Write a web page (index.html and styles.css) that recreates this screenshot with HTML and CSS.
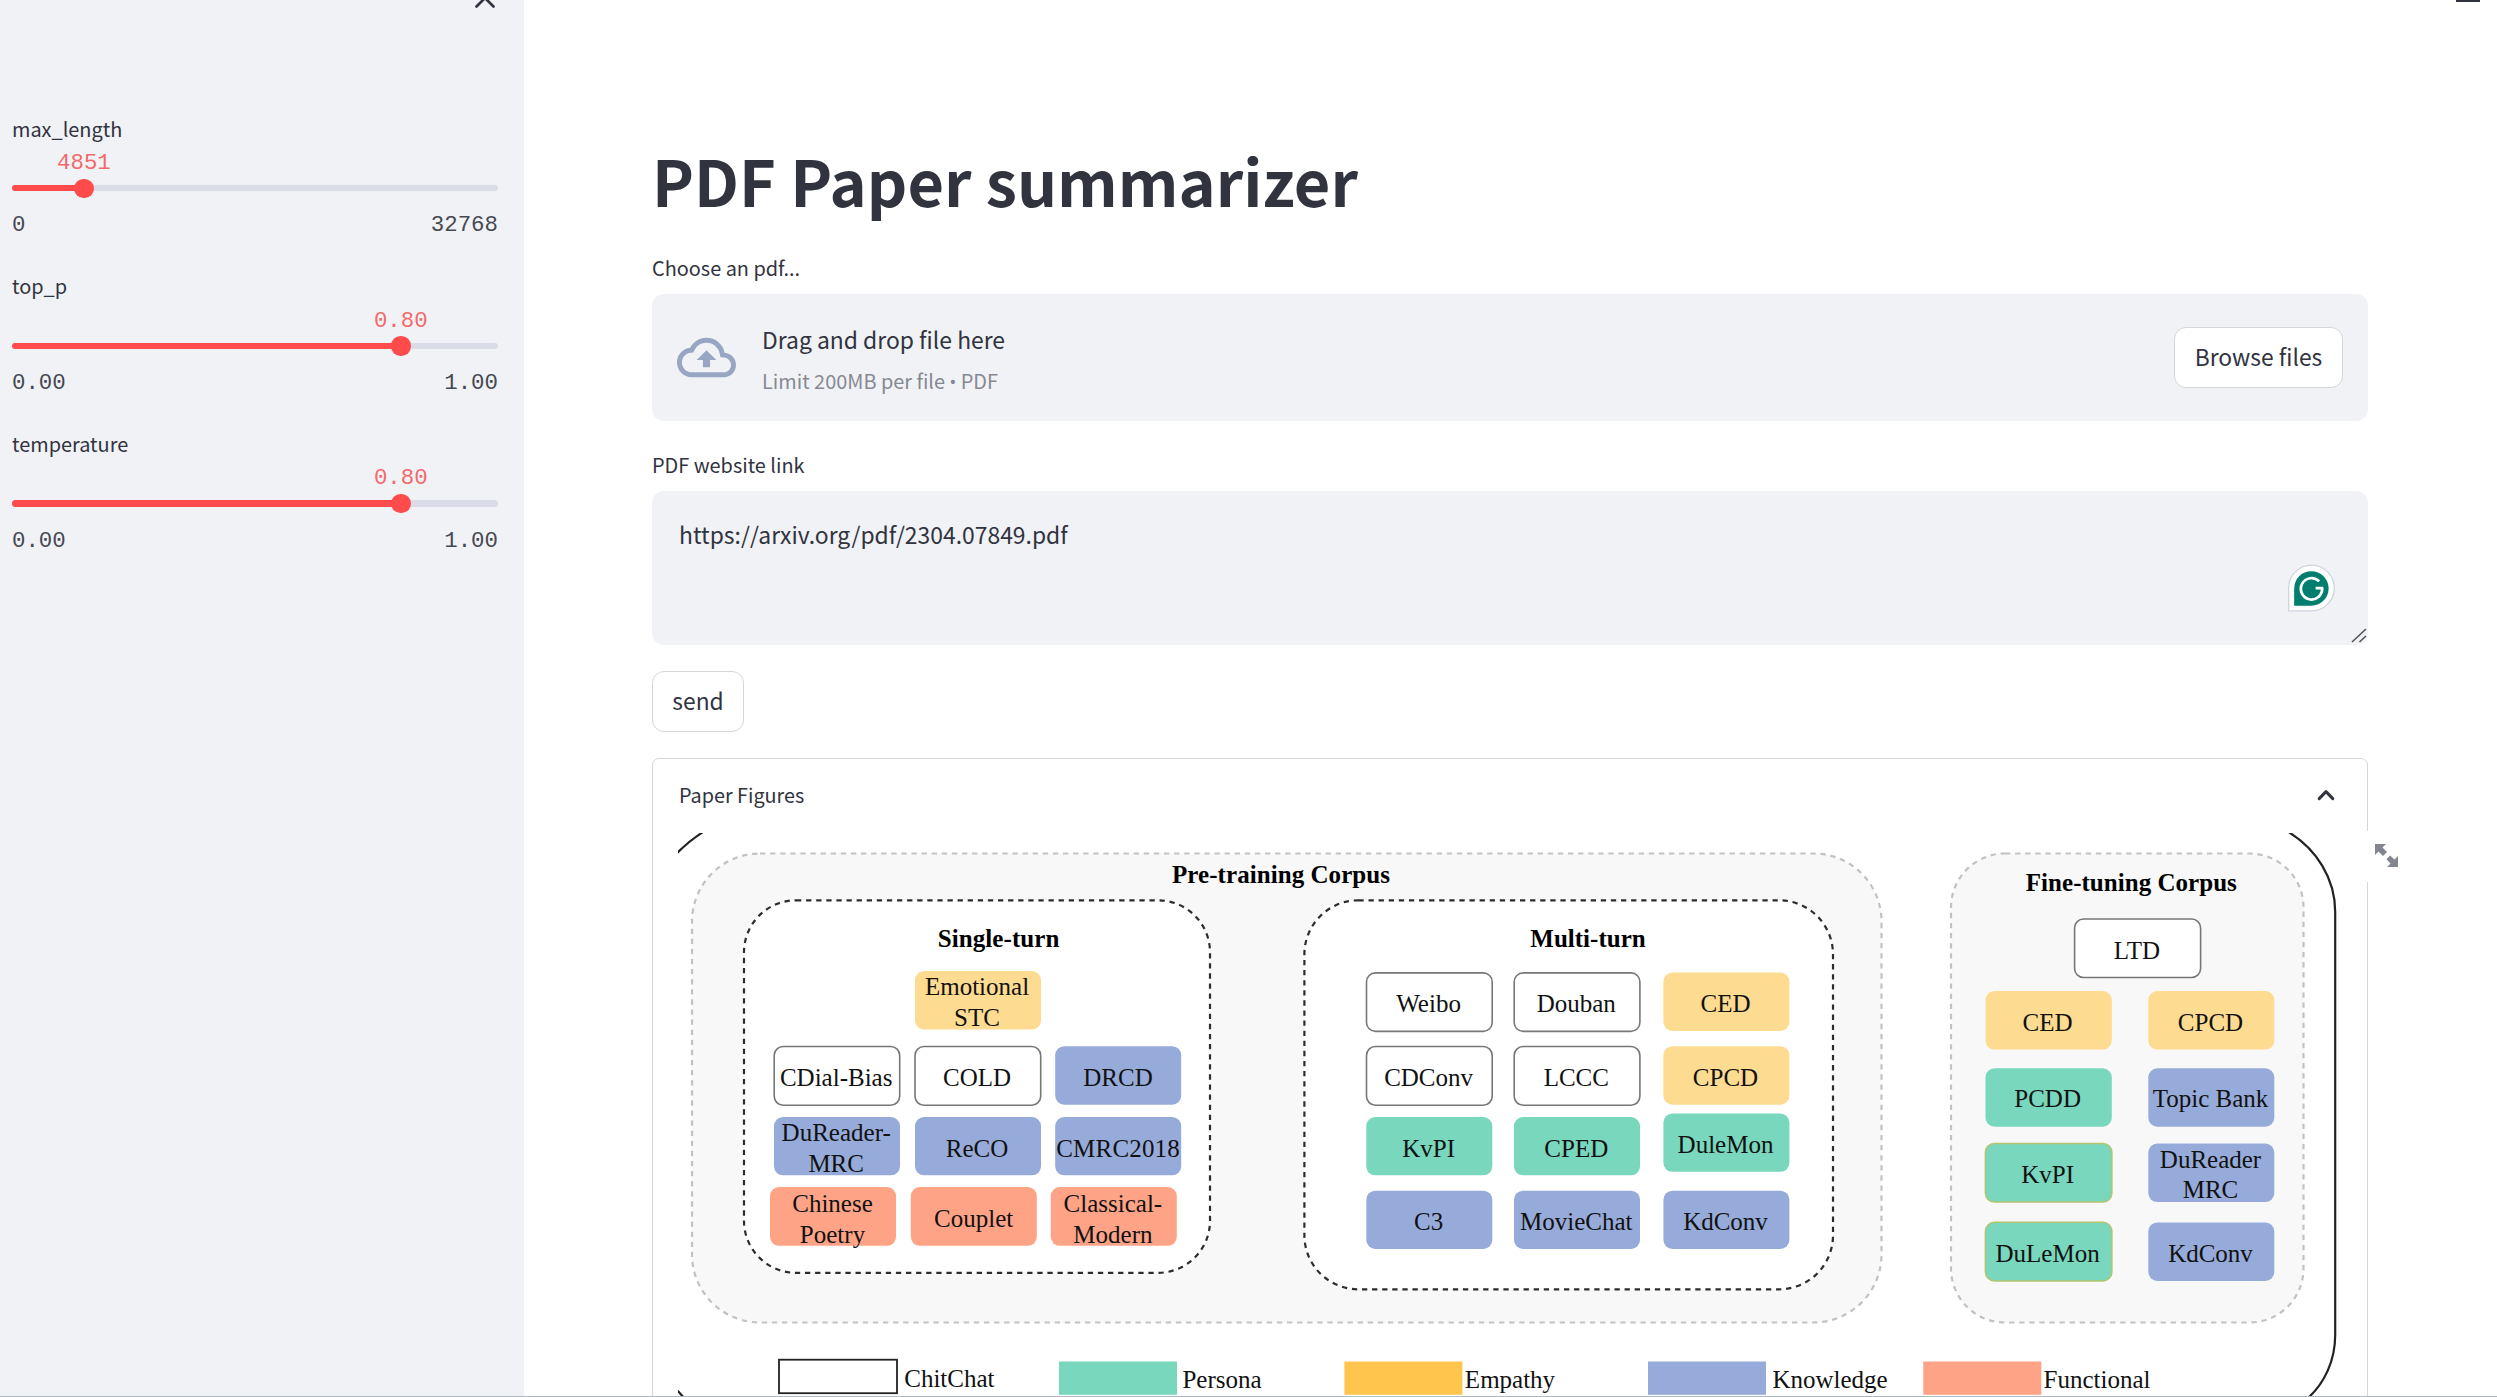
FILE: index.html
```html
<!DOCTYPE html>
<html lang="en">
<head>
<meta charset="utf-8">
<title>PDF Paper summarizer</title>
<link rel="stylesheet" href="styles.css">
</head>
<body>
<div class="app">
  <aside class="sidebar">
    <svg class="close" viewBox="0 0 22 22"><path d="M2.5 2.5 19.5 19.5M19.5 2.5 2.5 19.5"/></svg>
    <div class="slider">
      <label class="label">max_length</label>
      <div class="track"><div class="fill" style="width:14.8%"></div><div class="thumb" style="left:14.8%"><span class="value">4851</span></div></div>
      <div class="range"><span>0</span><span>32768</span></div>
    </div>
    <div class="slider">
      <label class="label">top_p</label>
      <div class="track"><div class="fill" style="width:80%"></div><div class="thumb" style="left:80%"><span class="value">0.80</span></div></div>
      <div class="range"><span>0.00</span><span>1.00</span></div>
    </div>
    <div class="slider">
      <label class="label">temperature</label>
      <div class="track"><div class="fill" style="width:80%"></div><div class="thumb" style="left:80%"><span class="value">0.80</span></div></div>
      <div class="range"><span>0.00</span><span>1.00</span></div>
    </div>
  </aside>
  <main class="main">
    <div class="menu"></div>
    <h1 class="title">PDF Paper summarizer</h1>
    <div class="label">Choose an pdf...</div>
    <section class="dropzone">
      <svg class="cloud" viewBox="0 0 24 24"><path d="M19.35 10.04A7.49 7.49 0 0 0 12 4C9.11 4 6.6 5.64 5.35 8.04A5.994 5.994 0 0 0 0 14c0 3.31 2.69 6 6 6h13c2.76 0 5-2.24 5-5 0-2.64-2.05-4.78-4.65-4.96zM19 18H6c-2.21 0-4-1.79-4-4 0-2.05 1.53-3.76 3.56-3.97l1.07-.11.5-.95A5.469 5.469 0 0 1 12 6c2.62 0 4.88 1.86 5.39 4.43l.3 1.5 1.53.11A2.98 2.98 0 0 1 22 15c0 1.65-1.35 3-3 3zM8 13h2.55v3h2.9v-3H16l-4-4z"/></svg>
      <div class="drop-text"><span class="drop-main">Drag and drop file here</span><span class="drop-sub">Limit 200MB per file <span class="bullet">•</span> PDF</span></div>
      <button class="btn browse">Browse files</button>
    </section>
    <div class="label">PDF website link</div>
    <div class="textarea">
      <span>https://arxiv.org/pdf/2304.07849.pdf</span>
      <svg class="grammarly" viewBox="0 0 48 48"><path class="g-shell" d="M.7 47.3V24A23.3 23.3 0 1 1 24 47.3z"/><path class="g-body" d="M6.3 42V24.5A17.6 17.6 0 1 1 24 42z"/><path class="g-mark" d="M31.8 17.2A10.9 10.9 0 1 0 34.9 24.2M36 24.2H28.2"/></svg>
      <svg class="resize" viewBox="0 0 16 15"><path d="M1 14 15 1M8.5 14 15 8"/></svg>
    </div>
    <button class="btn send">send</button>
    <section class="expander">
      <header class="expander-head"><span>Paper Figures</span><svg class="chevron" viewBox="0 0 18 12"><path d="M2.2 9.6 9 2.6 15.8 9.6"/></svg></header>
      <div class="fullscreen"><svg viewBox="0 0 23 23"><path d="M0 0H11L7.5 3.5 12 8 8 12 3.5 7.5 0 11ZM23 23H12L15.5 19.5 11.5 15.3 15 11.5 19.5 15.5 23 12Z"/></svg></div>
      <svg class="figure" viewBox="678 833 1674 564">
        <g class="frame"><path d="M670 861Q683 845 703 832"/><path d="M2287 831C2317 849 2335.2 879 2335.2 912V1335C2335.2 1360 2325 1383 2307 1399"/><path d="M676 1389 686 1400"/></g>
        <rect class="corpus" x="692" y="853.5" width="1189.5" height="469" rx="68"/>
        <rect class="corpus" x="1951" y="853.5" width="352.5" height="469" rx="54"/>
        <rect class="turn" x="744" y="900.3" width="466" height="372.5" rx="52"/>
        <rect class="turn" x="1304.4" y="900.3" width="528.6" height="389" rx="54"/>
        <g class="heading">
          <text x="1281" y="883.4" textLength="218">Pre-training Corpus</text>
          <text x="998.6" y="947" textLength="121.5">Single-turn</text>
          <text x="1588" y="947" textLength="115.5">Multi-turn</text>
          <text x="2131.3" y="891.3" textLength="211">Fine-tuning Corpus</text>
        </g>
        <g class="empathy">
          <rect x="915" y="971" width="126" height="58.5" rx="9"/>
          <rect x="1663.4" y="972.5" width="126" height="58.5" rx="9"/><rect x="1663.4" y="1046.2" width="126" height="58.5" rx="9"/>
          <rect x="1985.5" y="991" width="126.3" height="58.6" rx="9"/><rect x="2148.3" y="991" width="126" height="58.6" rx="9"/>
        </g>
        <g class="chitchat">
          <rect x="774.2" y="1046.5" width="125.5" height="58.7" rx="9"/><rect x="915" y="1046.5" width="125.7" height="58.7" rx="9"/>
          <rect x="1366.5" y="972.9" width="125.7" height="58.5" rx="9"/><rect x="1514.2" y="972.9" width="125.7" height="58.5" rx="9"/>
          <rect x="1366.5" y="1046.5" width="125.7" height="58.7" rx="9"/><rect x="1514.2" y="1046.5" width="125.7" height="58.7" rx="9"/>
          <rect x="2074.6" y="919" width="126" height="58.5" rx="9"/>
        </g>
        <g class="knowledge">
          <rect x="1055.2" y="1046.2" width="126" height="58.5" rx="9"/>
          <rect x="774" y="1117" width="126" height="58.3" rx="9"/><rect x="915" y="1117" width="126" height="58.3" rx="9"/><rect x="1055.2" y="1117" width="126" height="58.3" rx="9"/>
          <rect x="1366.3" y="1190.7" width="126" height="58.3" rx="9"/><rect x="1514" y="1190.7" width="126" height="58.3" rx="9"/><rect x="1663.4" y="1190.7" width="126" height="58.3" rx="9"/>
          <rect x="2148.3" y="1068.3" width="126" height="58.4" rx="9"/><rect x="2148.3" y="1143.5" width="126" height="58.6" rx="9"/><rect x="2148.3" y="1222.4" width="126" height="58.5" rx="9"/>
          <rect x="1648" y="1361.5" width="118" height="33.3"/>
        </g>
        <g class="persona">
          <rect x="1366.3" y="1117" width="126" height="58.3" rx="9"/><rect x="1514" y="1117" width="126" height="58.3" rx="9"/><rect x="1663.4" y="1113.5" width="126" height="58.3" rx="9"/>
          <rect x="1985.5" y="1068.3" width="126.3" height="58.4" rx="9"/>
          <rect class="ringed" x="1985.4" y="1143.5" width="126.5" height="58.6" rx="9"/><rect class="ringed" x="1985.4" y="1222.3" width="126.5" height="58.6" rx="9"/>
          <rect x="1059" y="1361.5" width="118" height="33.3"/>
        </g>
        <g class="functional">
          <rect x="770" y="1187" width="126" height="58.8" rx="9"/><rect x="910.8" y="1187" width="126" height="58.8" rx="9"/><rect x="1050.8" y="1187" width="126" height="58.8" rx="9"/>
          <rect x="1923.3" y="1361.5" width="118" height="33.3"/>
        </g>
        <rect class="legend-chitchat" x="779" y="1359.7" width="118" height="33.5"/>
        <rect class="legend-empathy" x="1344.4" y="1361.5" width="118" height="33.3"/>
        <g class="names">
          <text x="977" y="995.4">Emotional</text><text x="977" y="1026">STC</text>
          <text x="836.2" y="1086.4">CDial-Bias</text><text x="977" y="1086.4">COLD</text><text x="1118" y="1086.4">DRCD</text>
          <text x="836.2" y="1141.4">DuReader-</text><text x="836.2" y="1171.7">MRC</text><text x="977" y="1157">ReCO</text><text x="1118" y="1157" textLength="123.5">CMRC2018</text>
          <text x="832.5" y="1212">Chinese</text><text x="832.5" y="1242.6">Poetry</text><text x="973.7" y="1227">Couplet</text><text x="1112.9" y="1212">Classical-</text><text x="1112.9" y="1242.6">Modern</text>
          <text x="1428.6" y="1012.4">Weibo</text><text x="1576.3" y="1012.4">Douban</text><text x="1725.5" y="1012.4">CED</text>
          <text x="1428.6" y="1086.4">CDConv</text><text x="1576.3" y="1086.4">LCCC</text><text x="1725.5" y="1086.4">CPCD</text>
          <text x="1428.6" y="1157">KvPI</text><text x="1576.3" y="1157">CPED</text><text x="1725.5" y="1152.9">DuleMon</text>
          <text x="1428.6" y="1230.2">C3</text><text x="1576.3" y="1230.2">MovieChat</text><text x="1725.5" y="1230.2">KdConv</text>
          <text x="2137" y="958.7">LTD</text><text x="2047.6" y="1031">CED</text><text x="2210.5" y="1031">CPCD</text>
          <text x="2047.6" y="1107.4">PCDD</text><text x="2210.5" y="1107.4">Topic Bank</text>
          <text x="2047.6" y="1183.4">KvPI</text><text x="2210.5" y="1167.6">DuReader</text><text x="2210.5" y="1198.2">MRC</text>
          <text x="2047.6" y="1261.5">DuLeMon</text><text x="2210.5" y="1261.5">KdConv</text>
          <text x="949.4" y="1386.6">ChitChat</text><text x="1222" y="1387.8">Persona</text><text x="1510" y="1387.8">Empathy</text><text x="1830" y="1387.8">Knowledge</text><text x="2097" y="1387.8">Functional</text>
        </g>
      </svg>
    </section>
  </main>
</div>
<div class="edge"></div>
</body>
</html>
```
FILE: styles.css
```css
* { box-sizing: border-box; }
body { margin: 0; height: 1397px; overflow: hidden; background: #fff; color: #31333f; font-family: "Noto Sans CJK SC", sans-serif; }
.app { display: flex; height: 1397px; overflow: hidden; }
.label { display: block; height: 32px; font-size: 19.9px; line-height: 34px; }

.sidebar { position: relative; flex: none; width: 524px; padding: 111.8px 26px 0 12px; background: #f0f2f6; }
.close { position: absolute; left: 474px; top: -13.5px; width: 22px; height: 22px; fill: none; stroke: #31333f; stroke-width: 2.7; stroke-linecap: round; }
.slider { height: 157.6px; }
.track { position: relative; height: 6.5px; margin: 41.2px 0 20px; border-radius: 4px; background: #dadde8; }
.fill { height: 100%; border-radius: 4px; background: #ff4b4b; }
.thumb { position: absolute; top: 50%; width: 19.4px; height: 19.4px; margin: -9.7px 0 0 -9.7px; border-radius: 50%; background: #ff4b4b; }
.value { position: absolute; left: 50%; bottom: 21px; transform: translateX(-50%); color: #f4686a; font: 22.4px/28px "Liberation Mono", monospace; }
.range { display: flex; justify-content: space-between; color: #464853; font: 22.4px/28px "Liberation Mono", monospace; }

.main { position: relative; flex: 1; padding: 139.8px 129px 0 128px; }
.menu { position: absolute; top: 0; right: 17px; width: 24px; height: 2px; background: #31333f; }
.title { height: 80px; margin: 0 0 31.2px; font-size: 63px; font-weight: 700; line-height: 80px; white-space: nowrap; }
.dropzone { display: flex; align-items: center; height: 127px; margin: 11px 0 27px; padding: 0 25px; border-radius: 12px; background: #f0f2f6; }
.cloud { width: 59px; height: 59px; margin-right: 26px; fill: #97a6c3; }
.drop-text { display: flex; flex: 1; flex-direction: column; align-items: flex-start; padding-top: 4px; }
.drop-main { font-size: 22.9px; line-height: 44px; }
.drop-sub { margin-top: 1px; font-size: 19.9px; line-height: 38px; color: #878992; }
.bullet { font-family: Roboto, sans-serif; }
.btn { display: flex; align-items: center; justify-content: center; height: 61px; padding: 0; border: 1px solid #d6d6d9; border-radius: 12px; background: #fff; color: #31333f; font: 22.8px/38px "Noto Sans CJK SC", sans-serif; white-space: nowrap; }
.browse { width: 169px; }
.textarea { position: relative; height: 154px; margin-top: 11px; padding: 24px 27px; border-radius: 12px; background: #f0f2f6; font-size: 22.9px; line-height: 39px; }
.grammarly { position: absolute; left: 1636px; top: 73px; width: 47px; height: 48px; }
.g-shell { fill: #fff; stroke: #d0d3de; stroke-width: 1.3; }
.g-body { fill: #027e6f; }
.g-mark { fill: none; stroke: #fff; stroke-width: 2.8; }
.resize { position: absolute; left: 1698.5px; top: 137.5px; width: 16px; height: 15px; fill: none; stroke: #555; stroke-width: 1.6; }
.send { width: 92px; margin-top: 26px; }
.expander { position: relative; height: 660px; margin-top: 26px; border: 1px solid #d6d6d9; border-radius: 7px; }
.expander-head { display: flex; align-items: center; justify-content: space-between; height: 74px; padding: 0 32px 2px 26px; font-size: 19.8px; line-height: 32px; }
.chevron { width: 18px; height: 12px; fill: none; stroke: #31333f; stroke-width: 3; stroke-linecap: round; stroke-linejoin: round; }
.fullscreen { position: absolute; left: 1697px; top: 72px; width: 51px; height: 51px; background: #fff; }
.fullscreen svg { display: block; width: 23px; height: 23px; margin: 13px 0 0 25px; fill: #838690; }
.figure { position: relative; display: block; width: 1674px; height: 564px; margin-left: 25px; font-family: "Liberation Serif", serif; font-size: 25px; text-anchor: middle; }
.frame { fill: none; stroke: #222; stroke-width: 2.2; }
.corpus { fill: #f8f8f8; stroke: #c2c2c2; stroke-width: 2.2; stroke-dasharray: 5.3 4.8; }
.turn { fill: #fff; stroke: #2c2c2c; stroke-width: 2.2; stroke-dasharray: 5.3 4.8; }
.heading { font-weight: 700; }
.empathy { fill: #fddb90; }
.chitchat { fill: #fff; stroke: #777; stroke-width: 1.6; }
.knowledge { fill: #97abda; }
.persona { fill: #78d7bc; }
.ringed { stroke: #b5c46e; stroke-width: 1.5; }
.functional { fill: #ffa387; }
.legend-chitchat { fill: #fff; stroke: #222; stroke-width: 1.8; }
.legend-empathy { fill: #ffc54d; }
.names { fill: #111; }
.edge { position: absolute; left: 0; top: 1396px; width: 100%; height: 1px; background: #adb8c0; }
```
